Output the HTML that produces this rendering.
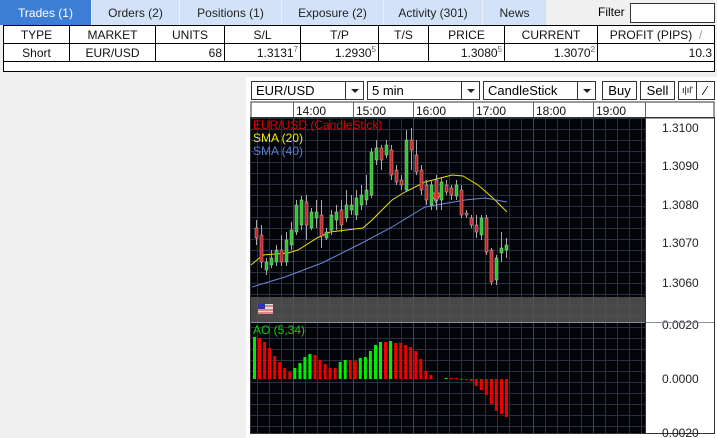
<!DOCTYPE html>
<html><head><meta charset="utf-8"><style>
*{margin:0;padding:0;box-sizing:border-box}
body{width:717px;height:438px;background:#f0f0f0;font-family:"Liberation Sans",sans-serif;font-size:12px;position:relative;overflow:hidden}
.tab{position:absolute;top:0;height:25px;background:#d3e2f8;color:#222;text-align:center;line-height:27px;font-size:12px}
.tab.a{background:#3c7dd6;color:#fff}
table{position:absolute;left:3px;top:25px;width:712px;border-collapse:collapse;background:#fff}
td{border:1px solid #000;height:18px;font-size:12px;padding:0 2px;color:#111}
sup{font-size:8px;color:#666;vertical-align:5px}
.box{position:absolute;top:81px;height:19px;border:1px solid #333;background:#fff;font-size:13px;line-height:17px;padding-left:4px}
.arr{position:absolute;right:0;top:0;width:18px;height:17px;border-left:1px solid #333}
.arr:after{content:"";position:absolute;left:5px;top:7px;border:4px solid transparent;border-top:4px solid #222}
.btn{position:absolute;top:81px;height:19px;border:1px solid #333;background:#fff;font-size:13px;line-height:17px;text-align:center}
</style></head><body>
<div class="tab a" style="left:0;width:91px">Trades (1)</div>
<div class="tab" style="left:92px;width:87px">Orders (2)</div>
<div class="tab" style="left:180px;width:101px">Positions (1)</div>
<div class="tab" style="left:282px;width:101px">Exposure (2)</div>
<div class="tab" style="left:384px;width:98px">Activity (301)</div>
<div class="tab" style="left:483px;width:63px">News</div>
<div style="position:absolute;left:598px;top:5px;font-size:12px">Filter</div>
<div style="position:absolute;left:630px;top:3px;width:85px;height:20px;border:1px solid #333;background:#fff"></div>
<table>
<tr style="text-align:center"><td style="width:66px">TYPE</td><td style="width:86px">MARKET</td><td style="width:69px">UNITS</td><td style="width:76px">S/L</td><td style="width:78px">T/P</td><td style="width:50px">T/S</td><td style="width:76px">PRICE</td><td style="width:93px">CURRENT</td><td>PROFIT (PIPS) &nbsp;<span style="color:#999">/</span></td></tr>
<tr><td style="text-align:center">Short</td><td style="text-align:center">EUR/USD</td><td style="text-align:right">68</td><td style="text-align:right">1.3131<sup>7</sup></td><td style="text-align:right">1.2930<sup>5</sup></td><td></td><td style="text-align:right">1.3080<sup>5</sup></td><td style="text-align:right">1.3070<sup>2</sup></td><td style="text-align:right">10.3</td></tr>
<tr><td colspan="9" style="height:10px"></td></tr>
</table>
<div style="position:absolute;left:246px;top:77px;width:471px;height:361px;background:#fff"></div>
<div class="box" style="left:251px;width:113px">EUR/USD<div class="arr"></div></div>
<div class="box" style="left:367px;width:113px">5 min<div class="arr"></div></div>
<div class="box" style="left:483px;width:113px">CandleStick<div class="arr"></div></div>
<div class="btn" style="left:602px;width:35px">Buy</div>
<div class="btn" style="left:640px;width:35px">Sell</div>
<div class="btn" style="left:678px;width:19px;font-size:9px">ı|ıl'</div>
<div class="btn" style="left:696px;width:19px">⁄</div>
<svg style="position:absolute;left:0;top:0" width="717" height="438">
<defs>
<pattern id="g" x="5" y="118" width="12" height="11" patternUnits="userSpaceOnUse"><rect width="12" height="11" fill="#02040a"/><path d="M0.5 0V11M0 0.5H12" stroke="#263041" stroke-width="1"/></pattern>
</defs>
<rect x="251" y="102" width="463" height="16" fill="#fff" stroke="#333"/>
<g stroke="#666"><line x1="293.5" y1="102" x2="293.5" y2="118"/><line x1="353.5" y1="102" x2="353.5" y2="118"/><line x1="413.5" y1="102" x2="413.5" y2="118"/><line x1="473.5" y1="102" x2="473.5" y2="118"/><line x1="533.5" y1="102" x2="533.5" y2="118"/><line x1="593.5" y1="102" x2="593.5" y2="118"/><line x1="645.5" y1="102" x2="645.5" y2="118"/></g>
<g font-size="12" fill="#111" font-family="Liberation Sans"><text x="296" y="115">14:00</text><text x="356" y="115">15:00</text><text x="416" y="115">16:00</text><text x="476" y="115">17:00</text><text x="536" y="115">18:00</text><text x="596" y="115">19:00</text></g>
<rect x="251" y="118" width="394" height="315" fill="url(#g)"/>
<g stroke="#3f4756"><line x1="293.5" y1="118" x2="293.5" y2="433"/><line x1="353.5" y1="118" x2="353.5" y2="433"/><line x1="413.5" y1="118" x2="413.5" y2="433"/><line x1="473.5" y1="118" x2="473.5" y2="433"/><line x1="533.5" y1="118" x2="533.5" y2="433"/><line x1="593.5" y1="118" x2="593.5" y2="433"/></g>
<rect x="251" y="297" width="394" height="25" fill="#555" opacity="0.85"/>
<rect x="258" y="304" width="15" height="10" fill="#ddd"/><rect x="258" y="304" width="7" height="5" fill="#33a"/><g stroke="#c33"><line x1="265" y1="306" x2="273" y2="306"/><line x1="258" y1="310" x2="273" y2="310"/><line x1="258" y1="313" x2="273" y2="313"/></g>
<line x1="251" y1="322.5" x2="714" y2="322.5" stroke="#8890a0"/>
<rect x="250.5" y="117.5" width="464" height="316" fill="none" stroke="#333"/>
<line x1="645.5" y1="118" x2="645.5" y2="433" stroke="#333"/>
<g font-size="12" fill="#222" font-family="Liberation Sans"><text x="662" y="132">1.3100</text><text x="662" y="170">1.3090</text><text x="662" y="209">1.3080</text><text x="662" y="247">1.3070</text><text x="662" y="287">1.3060</text><text x="662" y="329">0.0020</text><text x="662" y="383">0.0000</text><text x="662" y="437">0.0020</text></g>
<rect x="646" y="322" width="68" height="1" fill="#8890a0"/>
<polyline fill="none" stroke="#e8e000" stroke-width="1" points="251,265 263,255 288,253 298,250 317,238 330,232 363,228 372,220 392,200 405,192 425,182 452,175 463,176 478,185 493,198 507,212"/>
<polyline fill="none" stroke="#6a8ad8" stroke-width="1" points="252,287 285,277 322,263 362,243 392,227 425,207 465,200 485,198 507,202"/>
<path d="M431 193h10l-5 10z" fill="#e00" stroke="#fff" stroke-width="0.5"/>
<g font-size="12" font-family="Liberation Sans"><text x="253" y="129" fill="#e00000">EUR/USD (CandleStick)</text><text x="253" y="142" fill="#f0f000">SMA (20)</text><text x="253" y="155" fill="#5b7fd0">SMA (40)</text><text x="253" y="334" fill="#10d010">AO (5,34)</text></g>
</svg>
<svg id="s" style="position:absolute;left:0;top:0" width="717" height="438"></svg>
<script>
var C=[[256,228,238,220,245],[261,235,262,225,268],[266,270,262,258,275],[271,265,258,250,268],[276,262,250,245,266],[281,250,262,235,266],[286,262,240,232,266],[291,245,230,222,250],[296,232,205,200,235],[301,225,200,196,230],[306,202,225,195,240],[311,228,212,208,230],[316,218,212,200,228],[321,215,236,200,248],[326,238,232,228,240],[331,230,215,210,235],[336,220,212,205,230],[341,210,225,200,232],[346,218,205,190,222],[351,210,205,195,215],[356,215,198,190,220],[361,205,195,185,210],[366,200,190,175,205],[371,195,152,148,198],[376,160,148,140,165],[381,148,160,145,170],[386,155,145,140,158],[391,150,175,145,180],[396,170,182,165,185],[401,180,185,175,190],[406,190,140,130,192],[411,140,150,128,170],[416,155,172,140,175],[421,170,190,165,195],[426,185,200,180,205],[431,205,185,180,210],[436,180,200,175,210],[441,200,182,178,210],[446,185,192,180,195],[451,188,195,185,200],[456,196,185,180,200],[461,190,215,185,218],[466,213,215,210,218],[471,218,225,215,228],[476,225,232,215,238],[481,235,218,215,240],[486,218,252,215,255],[491,250,282,248,285],[496,280,258,255,285],[501,253,248,232,262],[506,250,245,238,258]];
var h='';C.forEach(function(c){var x=c[0],g=c[2]<c[1],t=Math.min(c[1],c[2]),b=Math.max(c[1],c[2]);h+='<line x1="'+(x+0.5)+'" y1="'+c[3]+'" x2="'+(x+0.5)+'" y2="'+c[4]+'" stroke="#aaa"/><rect x="'+(x-1)+'" y="'+t+'" width="3" height="'+Math.max(1,b-t)+'" fill="'+(g?'#2c2':'#c22')+'" stroke="#bbb" stroke-width="0.5"/>';});
var A=[42,41,37,31,23,17,11,7,11,16,22,25,24,19,15,11,11,17,19,19,18,21,22,28,34,37,37,38,36,36,34,32,28,20,8,4,0,0,1,1,1,-0.5,-1,-2,-7,-11,-16,-25,-32,-35,-38],p=0;
A.forEach(function(v,i){var x=253+5.04*i,col=v>p?'#0e0':'#e00';p=v;if(v==0)return;var y=v>0?379-v:379;h+='<rect x="'+x.toFixed(1)+'" y="'+y+'" width="3" height="'+Math.max(1,Math.abs(v))+'" fill="'+col+'"/>';});
document.getElementById('s').innerHTML=h;
</script>
</body></html>
